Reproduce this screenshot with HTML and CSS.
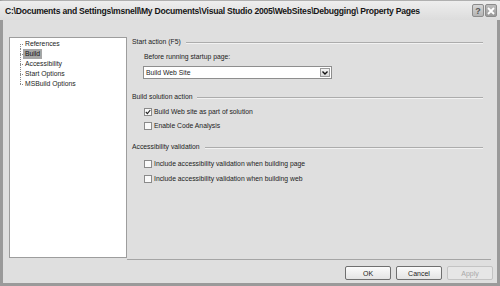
FILE: index.html
```html
<!DOCTYPE html>
<html lang="en">
<head>
  <meta charset="UTF-8">
  <title>Property Pages</title>
  <link rel="stylesheet" href="styles.css">
</head>
<body>
  <div class="window">
    <div class="titlebar">
      <span class="title">C:\Documents and Settings\msnell\My Documents\Visual Studio 2005\WebSites\Debugging\ Property Pages</span>
      <div class="caption-buttons">
        <span class="cap-btn help">?</span>
        <span class="cap-btn close">
          <svg width="8" height="8" viewBox="0 0 8 8"><path d="M1 1 L7 7 M7 1 L1 7" stroke="#fff" stroke-width="1.8"/></svg>
        </span>
      </div>
    </div>

    <div class="client">
      <div class="main">
        <ul class="tree">
          <li><span>References</span></li>
          <li class="selected"><span>Build</span></li>
          <li><span>Accessibility</span></li>
          <li><span>Start Options</span></li>
          <li><span>MSBuild Options</span></li>
        </ul>

        <div class="page">
          <div class="group-head first"><span>Start action (F5)</span></div>
          <div class="label">Before running startup page:</div>
          <div class="select">
            <span class="select-text">Build Web Site</span>
            <span class="select-arrow">
              <svg width="6" height="4" viewBox="0 0 6 4"><path d="M0.5 0.5 L3 3 L5.5 0.5" stroke="#111" stroke-width="1.4" fill="none"/></svg>
            </span>
          </div>

          <div class="group-head build"><span>Build solution action</span></div>
          <div class="check cb1"><span class="box checked"><svg width="6" height="6" viewBox="0 0 6 6"><path d="M0.8 3 L2.4 4.6 L5.3 1" stroke="#222" stroke-width="1.1" fill="none"/></svg></span>Build Web site as part of solution</div>
          <div class="check cb2"><span class="box"></span>Enable Code Analysis</div>

          <div class="group-head access"><span>Accessibility validation</span></div>
          <div class="check cb3"><span class="box"></span>Include accessibility validation when building page</div>
          <div class="check cb4"><span class="box"></span>Include accessibility validation when building web</div>
        </div>
      </div>

      <div class="buttons">
        <button class="btn">OK</button>
        <button class="btn">Cancel</button>
        <button class="btn disabled">Apply</button>
      </div>
    </div>
  </div>
</body>
</html>
```

FILE: styles.css
```css
body {
  margin: 0;
  padding: 0;
  background-color: #dfdfdf;
  font-family: "Liberation Sans", Arial, sans-serif;
  font-size: 6.8px;
  color: #1c1c1c;
}

.window {
  width: 500px;
  height: 286px;
  box-sizing: border-box;
  border: 3px solid #9a9a9a;
  border-top: 1px solid #b0b0b0;
  background-color: #dfdfdf;
  display: flex;
  flex-direction: column;
}

.titlebar {
  height: 19px;
  margin: 0 -3px;
  padding: 0 3px 0 5px;
  display: flex;
  align-items: center;
  justify-content: space-between;
  background: linear-gradient(#eeeeee, #dcdcdc);
}

.title {
  font-size: 8.6px;
  font-weight: bold;
  color: #151515;
  white-space: nowrap;
  letter-spacing: -0.25px;
}

.caption-buttons {
  display: flex;
  gap: 1px;
}

.cap-btn {
  width: 12px;
  height: 13px;
  box-sizing: border-box;
  border: 1px solid #8c8c8c;
  border-radius: 2px;
  display: flex;
  align-items: center;
  justify-content: center;
  font-weight: bold;
  font-size: 9px;
}

.cap-btn.help {
  background: linear-gradient(#d6d6d6, #b4b4b4);
  color: #555;
}

.cap-btn.close {
  background: linear-gradient(#bdbdbd, #9a9a9a);
}

.client {
  flex: 1;
  display: flex;
  flex-direction: column;
}

.main {
  display: flex;
  padding: 17px 0 0 6px;
}

/* tree on the left */
.tree {
  list-style: none;
  margin: 0;
  padding: 1px 0 0 0;
  width: 118px;
  height: 221px;
  box-sizing: border-box;
  background-color: #fff;
  border: 1px solid #9d9d9d;
}

.tree li {
  height: 10px;
  line-height: 10px;
  padding-left: 13px;
  background-image:
    repeating-linear-gradient(to bottom, #8a8a8a 0 1px, transparent 1px 2px),
    repeating-linear-gradient(to right, #8a8a8a 0 1px, transparent 1px 2px);
  background-repeat: no-repeat;
  background-size: 1px 100%, 4px 1px;
  background-position: 10px 0, 10px 5px;
}

.tree li:first-child {
  background-size: 1px 5px, 4px 1px;
  background-position: 10px 5px, 10px 5px;
}

.tree li:last-child {
  background-size: 1px 6px, 4px 1px;
  background-position: 10px 0, 10px 5px;
}

.tree li span {
  display: inline-block;
  padding: 0 2px;
}

.tree li.selected span {
  background-color: #a6a6a6;
  color: #111;
}

/* property page */
.page {
  width: 364px;
  height: 223px;
  box-sizing: border-box;
  padding: 0 8px 0 5px;
  border-bottom: 1px solid #a5a5a5;
}

.group-head {
  height: 10px;
  line-height: 10px;
  display: flex;
  align-items: center;
  gap: 5px;
}

.group-head::after {
  content: "";
  flex: 1;
  border-top: 1px solid #acacac;
  box-shadow: 0 1px 0 #f2f2f2;
}

.group-head.build {
  margin-top: 13px;
}

.group-head.access {
  margin-top: 11px;
}

.label {
  margin: 5px 0 0 12px;
  height: 10px;
  line-height: 10px;
}

.select {
  margin: 4px 0 0 11px;
  width: 189px;
  height: 13px;
  box-sizing: border-box;
  border: 1px solid #8e8e8e;
  background-color: #fff;
  display: flex;
  align-items: center;
  justify-content: space-between;
  padding: 0 1px 0 2px;
}

.select-arrow {
  width: 10px;
  height: 9px;
  box-sizing: border-box;
  border: 1px solid #9a9a9a;
  background: linear-gradient(#f4f4f4, #d8d8d8);
  display: flex;
  align-items: center;
  justify-content: center;
}

.check {
  height: 10px;
  line-height: 10px;
  margin-left: 12px;
  display: flex;
  align-items: center;
  gap: 2px;
}

.cb1 { margin-top: 5px; }
.cb2 { margin-top: 4px; }
.cb3 { margin-top: 7px; }
.cb4 { margin-top: 5px; }

.box {
  width: 8px;
  height: 8px;
  box-sizing: border-box;
  border: 1px solid #8a8a8a;
  background-color: #fafafa;
  display: flex;
  align-items: center;
  justify-content: center;
}

/* bottom buttons */
.buttons {
  display: flex;
  justify-content: flex-end;
  gap: 5px;
  margin-top: 6px;
  padding-right: 4px;
}

.btn {
  width: 46px;
  height: 14px;
  padding: 0;
  font-family: "Liberation Sans", Arial, sans-serif;
  font-size: 7px;
  color: #1c1c1c;
  border: 1px solid #6f6f6f;
  border-radius: 2px;
  background: linear-gradient(#fbfbfb, #e4e4e4);
}

.btn.disabled {
  color: #a9a9a9;
  border-color: #c3c3c3;
  background: #e6e6e6;
}
```
